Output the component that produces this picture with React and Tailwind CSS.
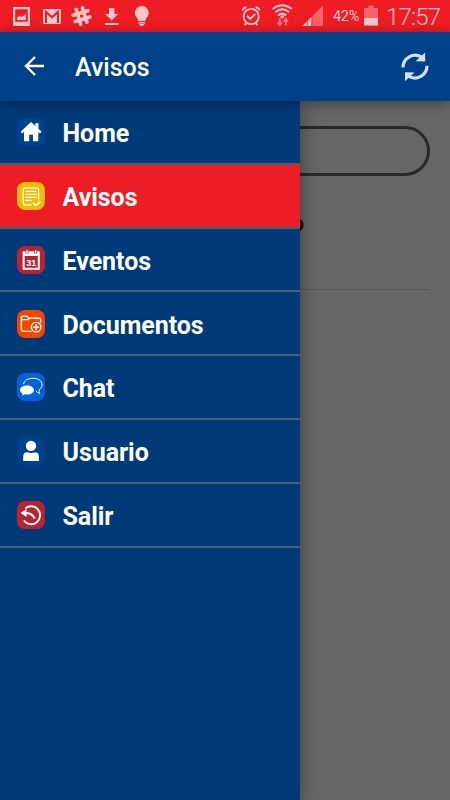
import React from 'react';

const HomeIcon = () => (
    <svg width="28" height="28" viewBox="0 0 28 28" fill="#fff">
        <path d="M14 4L3.6 13.8L5.3 15.6L7 14.1V23.3H12.2V16.8H16V23.3H21.3V14.1L22.9 15.6L24.5 13.8L21.5 10.8V5.2H18.3V8.1Z" />
    </svg>
);

const NoticeIcon = () => (
    <svg width="28" height="28" viewBox="0 0 28 28" fill="none" stroke="#fff" strokeWidth="1.2" strokeLinecap="round">
        <path d="M21.6 18V7.8Q21.6 6.2 20 6.2H7.8Q6.2 6.2 6.2 7.8V21.2Q6.2 22.8 7.8 22.8H14.2" />
        <path d="M8.8 9.4H19M8.8 12.4H19M8.8 15.4H19M8.8 18.4H14.5" />
        <path d="M16.6 21.4L18.6 23.2L23.2 20.2" strokeWidth="1.5" />
    </svg>
);

const CalendarIcon = () => (
    <svg width="28" height="28" viewBox="0 0 28 28" fill="none">
        <path d="M6.6 6.4H21.8V22.8H6.6Z" stroke="#fff" strokeWidth="2" />
        <path d="M6 5.6H22.4V10H6Z" fill="#fff" />
        <path d="M10 4V7.4M18.6 4V7.4" stroke="#b8232f" strokeWidth="2.8" />
        <path d="M10 4V7.2M18.6 4V7.2" stroke="#fff" strokeWidth="1.3" />
        <text x="14.2" y="19.8" textAnchor="middle" fontSize="9" fontWeight="700" fill="#fff" className="font-['Liberation_Sans',sans-serif]">31</text>
    </svg>
);

const FolderIcon = () => (
    <svg width="28" height="28" viewBox="0 0 28 28" fill="none" stroke="#fff" strokeWidth="1.4" strokeLinejoin="round">
        <path d="M14.5 21.4H6L4.4 19.6V7.4Q4.4 6.3 5.5 6.3H10.2L11.6 8.3H22.2Q23.6 8.3 23.6 9.7V12.8" />
        <path d="M5 9.6H11.2L12.4 8.5" />
        <circle cx="19.2" cy="17.2" r="4.8" />
        <path d="M19.2 14.2V20.2M16.2 17.2H22.2" />
    </svg>
);

const ChatIcon = () => (
    <svg width="28" height="28" viewBox="0 0 28 28" fill="none">
        <path d="M6.6 11.2C7 7.5 10.9 5.3 16 5.3C21.4 5.3 25.1 7.9 25.1 11.7C25.1 13.8 23.9 15.7 22 16.9Q22.1 18.8 22.7 20.4Q20.4 20 18.8 17.9" stroke="#fff" strokeWidth="1" />
        <path d="M9.9 12.4C13.8 12.4 16.9 14.3 16.9 16.9S13.8 21.4 9.9 21.4Q8.8 21.4 7.8 21.2Q6.6 22.3 4.9 22.4Q5.6 21.5 5.4 20.4C3.8 19.6 3 18.3 3 16.9C3 14.3 6 12.4 9.9 12.4Z" fill="#fff" />
    </svg>
);

const UserIcon = () => (
    <svg width="28" height="28" viewBox="0 0 28 28" fill="#fff">
        <circle cx="14" cy="8.9" r="5.2" />
        <path d="M6.2 24V19.5Q6.2 15.2 10.2 15.2Q14 16.8 17.8 15.2Q21.9 15.2 21.9 19.5V24Z" />
    </svg>
);

const ExitIcon = () => (
    <svg width="28" height="28" viewBox="0 0 28 28" fill="none" stroke="#fff" strokeWidth="1.9">
        <path d="M8.3 7.4A9 9 0 1 1 6.8 19.5" />
        <path d="M8.5 12.2Q14.6 11.6 17.8 17.6" strokeWidth="2.2" />
        <path d="M3.6 12L9.5 8.1V16Z" fill="#fff" stroke="none" />
    </svg>
);

const MENU = [
    { label: 'Home', Icon: HomeIcon, tile: 'bg-[#00418d]' },
    { label: 'Avisos', Icon: NoticeIcon, tile: 'bg-[#f2bd04]', active: true },
    { label: 'Eventos', Icon: CalendarIcon, tile: 'bg-[#b8232f]' },
    { label: 'Documentos', Icon: FolderIcon, tile: 'bg-[#f64500]' },
    { label: 'Chat', Icon: ChatIcon, tile: 'bg-[#0461d6]' },
    { label: 'Usuario', Icon: UserIcon, tile: 'bg-[#00418d]' },
    { label: 'Salir', Icon: ExitIcon, tile: 'bg-[#b8232f]' },
];

function StatusBar() {
    return (
        <div className="h-[31.5px] shrink-0 bg-[#ee1c24] flex items-center text-[#fbc6c8]">
            <svg width="160" height="31" viewBox="0 0 160 31" fill="currentColor">
                <path fillRule="evenodd" d="M13 7H30V26H13ZM15.2 9.2V21.8H27.8V9.2Z" />
                <path d="M17 20V17.5L20 15.8L21.5 17.2L25.8 14V20Z" />
                <rect x="43" y="9" width="18" height="15" rx="1.6" />
                <path d="M46 23V12L52 17.3L58 12V23" fill="none" stroke="#ee1c24" strokeWidth="2" />
                <g transform="rotate(-17 81.5 16)" fill="none" stroke="currentColor" strokeWidth="3.6" strokeLinecap="round">
                    <path d="M78.3 8.3V23.7M84.8 8.3V23.7M73.8 12.8H89.2M73.8 19.3H89.2" />
                </g>
                <path d="M109 8H114.4V14H118.4L111.7 20.4L105 14H109ZM105 23H118.5V25H105Z" />
                <path d="M141.8 6A7 7 0 0 0 134.8 13C134.8 16.2 137.8 18 138.3 21H145.3C145.8 18 148.8 16.2 148.8 13A7 7 0 0 0 141.8 6ZM138.4 21.8H145.2V23.2L143.4 25.7H140.2L138.4 23.2Z" />
                <path d="M138.3 21.4H145.3M138.8 23.4H144.8" stroke="#ee1c24" strokeWidth=".6" />
            </svg>
            <div className="flex-1" />
            <svg width="95" height="31" viewBox="237 0 95 31" fill="none" stroke="currentColor">
                <circle cx="251.2" cy="16.5" r="7.6" strokeWidth="1.9" />
                <path d="M247.2 16L250.2 19L255.2 14" strokeWidth="1.8" />
                <path d="M242.6 10.6Q243.2 7.6 246.4 7.2M255.6 7.2Q258.8 7.6 259.6 10.6M246.4 22.8L244.8 25.2M255.6 22.8L257.4 25.2" strokeWidth="2" />
                <path d="M272.6 9Q282.2 1.4 292 9M275.4 12.2Q282.2 6.4 289.2 12.2M278.2 15.4Q282.2 11.8 286.2 15.4" strokeWidth="2" />
                <path d="M282.2 15L284.4 16.8L282.2 18.8L280 16.8Z" fill="currentColor" stroke="none" />
                <path d="M279.8 18.5V24.5M277.4 22.3L279.8 25L282 22.3M285.8 25.5V19.5M283.6 21.6L285.8 19L288 21.6" strokeWidth="1.9" opacity=".55" />
                <path d="M323 5.5V26H302.5Z" fill="#f4646a" stroke="none" />
                <path d="M311.5 17V26H302.5Z" fill="currentColor" stroke="none" />
                <path d="M307.2 20V26M311.9 16V26" stroke="#ee1c24" strokeWidth=".7" />
            </svg>
            <span className="w-[31px] pl-[1px] text-[14.5px] leading-none tracking-[-0.3px] pt-[3px]">42%</span>
            <svg width="16" height="31" viewBox="0 0 16 31" fill="currentColor">
                <path d="M1 8H5.4V5.5H10.6V8H15V25.5H1Z" fill="#f4646a" />
                <path d="M1 18H15V25.5H1Z" />
            </svg>
            <span className="w-[71px] pl-[7px] text-[24px] leading-none font-light tracking-[-0.8px] pt-[3px] whitespace-nowrap">17:57</span>
        </div>
    );
}

function AppBar() {
    return (
        <header className="h-[69.5px] shrink-0 z-10 bg-[#004089] flex items-center shadow-[0_2px_12px_rgba(0,0,0,0.4)]">
            <svg className="ml-[24px]" width="22" height="22" viewBox="0 0 22 22" fill="none" stroke="#fff" strokeWidth="2.3">
                <path d="M20 11H2M11 2L2 11L11 20" />
            </svg>
            <h1 className="ml-[29px] text-[25px] leading-none font-medium text-white pt-[2px]">Avisos</h1>
            <svg className="ml-auto mr-[20px]" width="30" height="32" viewBox="0 0 30 32" fill="none" stroke="#d2dff0" strokeWidth="3.2">
                <path d="M3 17.6A12.2 12.2 0 0 1 21.7 7.2" />
                <path d="M27 15.8A12.2 12.2 0 0 1 8.5 26.2" />
                <path d="M25.2 2.4V11.4L15.6 11.2Z" fill="#d2dff0" stroke="none" />
                <path d="M5 31.2V22.2L14.4 22.4Z" fill="#d2dff0" stroke="none" />
            </svg>
        </header>
    );
}

function Drawer() {
    return (
        <aside className="absolute inset-y-0 left-0 w-[300px] bg-[#003a78] shadow-[0_0_18px_rgba(0,0,0,0.4)]">
            <nav className="flex flex-col">
                {MENU.map(({ label, Icon, tile, active }) => (
                    <div key={label} className={active ? 'bg-[#ee1c24]' : ''}>
                        <a className="h-[61.8px] pl-[17px] flex items-center gap-[18px]">
                            <span className={`w-7 h-7 mt-[0.5px] rounded-[8px] ${tile}`}>
                                <Icon />
                            </span>
                            <span className="-ml-[0.5px] text-[25px] leading-none font-bold text-white pt-[3.5px] tracking-[-0.05px]">{label}</span>
                        </a>
                        <div className="h-[2px] bg-[#535c6c]" />
                    </div>
                ))}
            </nav>
        </aside>
    );
}

export default function App() {
    return (
        <div className="w-[450px] h-[800px] flex flex-col overflow-hidden font-['Roboto',sans-serif]">
            <StatusBar />
            <AppBar />
            <main className="relative flex-1 bg-[#666] px-5 pt-[25px]">
                <div className="h-[50px] rounded-full border-[3px] border-[#292929]" />
                <p className="w-[284px] mt-[36px] h-[77px] text-right text-[22px] font-bold leading-[24px] text-black">o</p>
                <hr className="border-t border-[#565656]" />
                <Drawer />
            </main>
        </div>
    );
}
